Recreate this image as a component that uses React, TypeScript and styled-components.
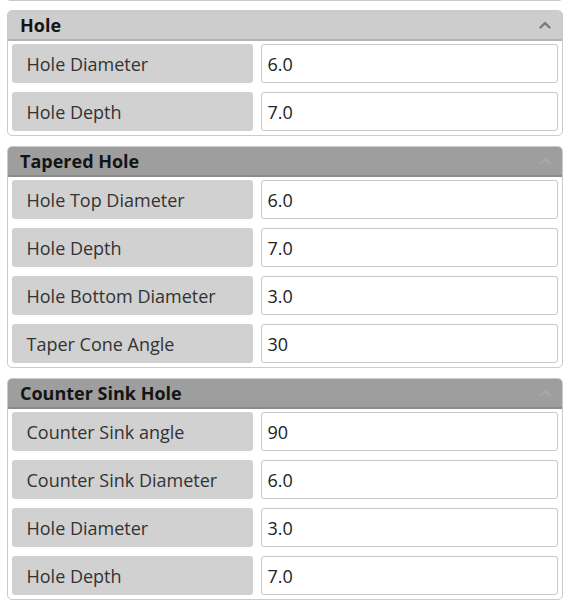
import React from "react";
import styled, { createGlobalStyle } from "styled-components";

const GlobalStyle = createGlobalStyle`
    html, body {
        margin: 0;
        padding: 0;
        background: #ffffff;
        font-family: "Open Sans", "Noto Sans", "Liberation Sans", sans-serif;
    }
    * {
        box-sizing: border-box;
    }
`;

interface Field {
    label: string;
    value: string;
}

interface Section {
    title: string;
    active?: boolean;
    fields: Field[];
}

const sections: Section[] = [
    {
        title: "Hole",
        active: true,
        fields: [
            { label: "Hole Diameter", value: "6.0" },
            { label: "Hole Depth", value: "7.0" },
        ],
    },
    {
        title: "Tapered Hole",
        fields: [
            { label: "Hole Top Diameter", value: "6.0" },
            { label: "Hole Depth", value: "7.0" },
            { label: "Hole Bottom Diameter", value: "3.0" },
            { label: "Taper Cone Angle", value: "30" },
        ],
    },
    {
        title: "Counter Sink Hole",
        fields: [
            { label: "Counter Sink angle", value: "90" },
            { label: "Counter Sink Diameter", value: "6.0" },
            { label: "Hole Diameter", value: "3.0" },
            { label: "Hole Depth", value: "7.0" },
        ],
    },
];

function Chevron({ active }: { active?: boolean }) {
    return (
        <ChevronIcon viewBox="0 0 12 8" active={active}>
            <polyline points="1.5,6.5 6,2 10.5,6.5" />
        </ChevronIcon>
    );
}

function App() {
    return (
        <Page>
            <GlobalStyle />
            <Stub />
            {sections.map((s) => (
                <Panel key={s.title}>
                    <Header active={s.active}>
                        <span className="title">{s.title}</span>
                        <Chevron active={s.active} />
                    </Header>
                    <Body>
                        {s.fields.map((f, i) => (
                            <Row key={i}>
                                <Label>{f.label}</Label>
                                <Value>{f.value}</Value>
                            </Row>
                        ))}
                    </Body>
                </Panel>
            ))}
        </Page>
    );
}

const Page = styled.div`
    width: 569px;
    padding: 0 7px 0 7px;
    display: flex;
    flex-direction: column;
    gap: 10px;
`;

const Stub = styled.div`
    height: 2px;
    margin: -1px 1px -1px 1px;
    border: 1.5px solid #c9c9c9;
    border-top: none;
    border-radius: 0 0 5px 5px;
`;

const Panel = styled.div`
    width: 556px;
    border: 1.5px solid #cbcbcb;
    border-radius: 5px;
    overflow: hidden;
    background: #ffffff;
`;

const Header = styled.div<{ active?: boolean }>`
    height: 30px;
    display: flex;
    align-items: center;
    justify-content: space-between;
    padding: 0 11px 0 12px;
    background: ${(p) => (p.active ? "#cdcdcd" : "#9e9e9e")};
    border-bottom: 2px solid ${(p) => (p.active ? "#b4b4b4" : "#8a8a8a")};
    > .title {
        font-size: 18px;
        font-weight: 700;
        color: #141414;
        line-height: 1;
    }
`;

const ChevronIcon = styled.svg<{ active?: boolean }>`
    width: 12px;
    height: 8px;
    fill: none;
    stroke: ${(p) => (p.active ? "#7a7a7a" : "#a9a9a9")};
    stroke-width: 2.4;
    stroke-linecap: round;
    stroke-linejoin: round;
`;

const Body = styled.div`
    display: flex;
    flex-direction: column;
    gap: 9px;
    padding: 3px 4px 4px 3.5px;
`;

const Row = styled.div`
    display: flex;
    gap: 8px;
    height: 39px;
`;

const Label = styled.div`
    width: 241px;
    flex-shrink: 0;
    display: flex;
    align-items: center;
    padding-left: 15px;
    background: #d1d1d1;
    border-radius: 3px;
    font-size: 18px;
    color: #333333;
`;

const Value = styled.div`
    flex: 1;
    display: flex;
    align-items: center;
    padding-left: 6px;
    background: #ffffff;
    border: 1.5px solid #c8c8c8;
    border-radius: 3px;
    font-size: 18px;
    color: #222222;
`;

export default App;
